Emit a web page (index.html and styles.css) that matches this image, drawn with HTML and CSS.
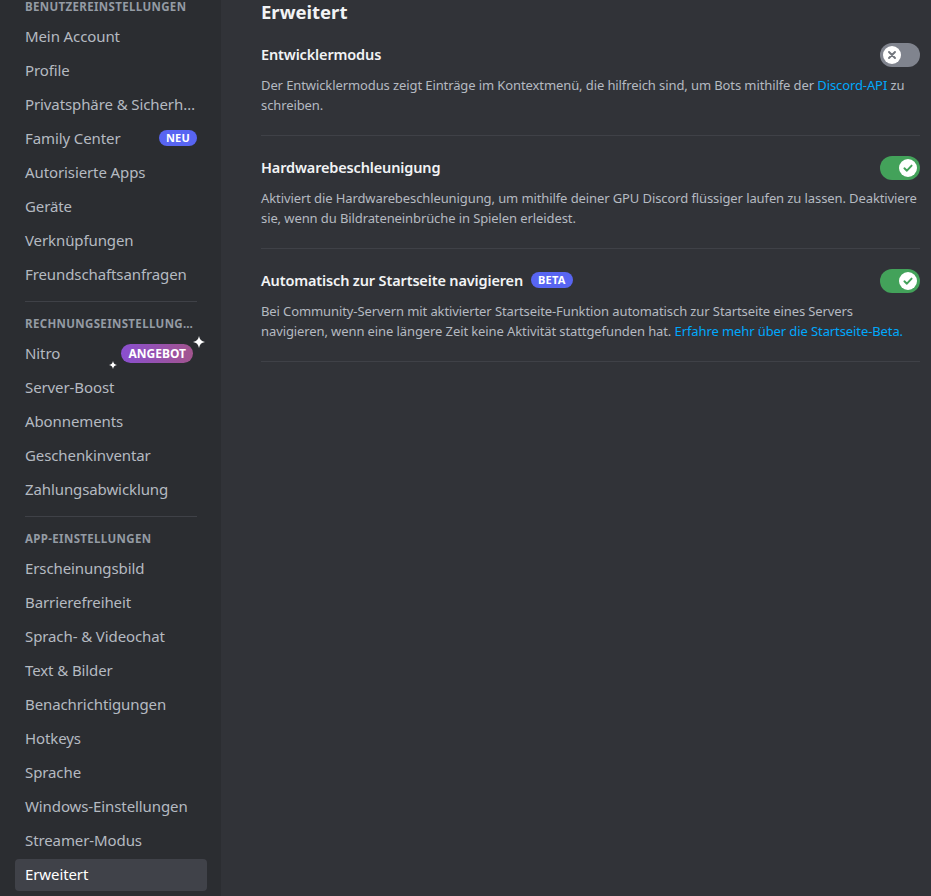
FILE: index.html
```html
<!DOCTYPE html>
<html lang="de">
<head>
<meta charset="utf-8">
<title>Erweitert</title>
<link rel="stylesheet" href="styles.css">
</head>
<body>
<div class="app">
  <nav class="sidebar">
    <div class="side-inner">
      <div class="side-header">Benutzereinstellungen</div>
      <div class="side-item">Mein Account</div>
      <div class="side-item">Profile</div>
      <div class="side-item">Privatsphäre &amp; Sicherheit</div>
      <div class="side-item with-badge">Family Center <span class="badge-neu">NEU</span></div>
      <div class="side-item">Autorisierte Apps</div>
      <div class="side-item">Geräte</div>
      <div class="side-item">Verknüpfungen</div>
      <div class="side-item">Freundschaftsanfragen</div>
      <div class="side-sep"></div>
      <div class="side-header">Rechnungseinstellungen</div>
      <div class="side-item with-badge">Nitro
        <span class="offer">
          <svg class="spark spark-big" viewBox="0 0 12 12" width="12" height="12"><path d="M6 0 C6.6 3.6 8.4 5.4 12 6 C8.4 6.6 6.6 8.4 6 12 C5.4 8.4 3.6 6.6 0 6 C3.6 5.4 5.4 3.6 6 0 Z" fill="#fff"/></svg>
          <span class="badge-offer">ANGEBOT</span>
          <svg class="spark spark-small" viewBox="0 0 12 12" width="8" height="8"><path d="M6 0 C6.6 3.6 8.4 5.4 12 6 C8.4 6.6 6.6 8.4 6 12 C5.4 8.4 3.6 6.6 0 6 C3.6 5.4 5.4 3.6 6 0 Z" fill="#fff"/></svg>
        </span>
      </div>
      <div class="side-item">Server-Boost</div>
      <div class="side-item">Abonnements</div>
      <div class="side-item">Geschenkinventar</div>
      <div class="side-item">Zahlungsabwicklung</div>
      <div class="side-sep"></div>
      <div class="side-header">App-Einstellungen</div>
      <div class="side-item">Erscheinungsbild</div>
      <div class="side-item">Barrierefreiheit</div>
      <div class="side-item">Sprach- &amp; Videochat</div>
      <div class="side-item">Text &amp; Bilder</div>
      <div class="side-item">Benachrichtigungen</div>
      <div class="side-item">Hotkeys</div>
      <div class="side-item">Sprache</div>
      <div class="side-item">Windows-Einstellungen</div>
      <div class="side-item">Streamer-Modus</div>
      <div class="side-item selected">Erweitert</div>
    </div>
  </nav>
  <main class="content">
    <h1 class="title">Erweitert</h1>

    <section class="setting">
      <div class="setting-row">
        <h2 class="setting-title">Entwicklermodus</h2>
        <div class="toggle off">
          <span class="knob">
            <svg viewBox="0 0 20 20" width="12" height="12"><path d="M5 5 L15 15 M15 5 L5 15" stroke="#72767d" stroke-width="3.2" stroke-linecap="round"/></svg>
          </span>
        </div>
      </div>
      <p class="setting-desc">Der Entwicklermodus zeigt Einträge im Kontextmenü, die hilfreich sind, um Bots mithilfe der <a class="link">Discord-API</a> zu schreiben.</p>
    </section>

    <section class="setting">
      <div class="setting-row">
        <h2 class="setting-title">Hardwarebeschleunigung</h2>
        <div class="toggle on">
          <span class="knob">
            <svg viewBox="0 0 20 20" width="12" height="12"><path d="M4 10.5 L8.2 14.5 L16 6" fill="none" stroke="#43a25a" stroke-width="3.2" stroke-linecap="round" stroke-linejoin="round"/></svg>
          </span>
        </div>
      </div>
      <p class="setting-desc">Aktiviert die Hardwarebeschleunigung, um mithilfe deiner GPU Discord flüssiger laufen zu lassen. Deaktiviere sie, wenn du Bildrateneinbrüche in Spielen erleidest.</p>
    </section>

    <section class="setting">
      <div class="setting-row">
        <h2 class="setting-title">Automatisch zur Startseite navigieren <span class="badge-beta">BETA</span></h2>
        <div class="toggle on">
          <span class="knob">
            <svg viewBox="0 0 20 20" width="12" height="12"><path d="M4 10.5 L8.2 14.5 L16 6" fill="none" stroke="#43a25a" stroke-width="3.2" stroke-linecap="round" stroke-linejoin="round"/></svg>
          </span>
        </div>
      </div>
      <p class="setting-desc">Bei Community-Servern mit aktivierter Startseite-Funktion automatisch zur Startseite eines Servers navigieren, wenn eine längere Zeit keine Aktivität stattgefunden hat. <a class="link">Erfahre mehr über die Startseite-Beta.</a></p>
    </section>
  </main>
</div>
</body>
</html>
```

FILE: styles.css
```css
* { box-sizing: border-box; }
html, body {
  margin: 0;
  padding: 0;
  height: 100%;
  background: #313338;
  font-family: "Noto Sans", "Open Sans", sans-serif;
  overflow: hidden;
}
.app {
  display: flex;
  height: 896px;
}
.sidebar {
  width: 221px;
  flex: 0 0 221px;
  background: #2b2d31;
  overflow: hidden;
}
.side-inner {
  margin-top: -7px;
  padding: 0 14px 0 15px;
  display: flex;
  flex-direction: column;
}
.side-header {
  padding: 6px 10px;
  font-size: 11.5px;
  line-height: 16px;
  font-weight: 700;
  text-transform: uppercase;
  letter-spacing: 0.35px;
  color: #949ba4;
  white-space: nowrap;
  overflow: hidden;
  text-overflow: ellipsis;
}
.side-item {
  display: block;
  height: 32px;
  margin-bottom: 2px;
  padding: 0 10px 2px;
  border-radius: 4px;
  font-size: 15px;
  line-height: 30px;
  letter-spacing: -0.1px;
  color: #b5bac1;
  white-space: nowrap;
  overflow: hidden;
  text-overflow: ellipsis;
}
.side-item.with-badge {
  display: flex;
  justify-content: space-between;
  align-items: center;
  overflow: visible;
}
.side-item.selected {
  background: #404249;
  color: #ffffff;
}
.side-sep {
  height: 1px;
  background: #3f4147;
  margin: 8px 10px;
}
.badge-neu {
  background: #5865f2;
  color: #fff;
  font-size: 11px;
  font-weight: 700;
  line-height: 16px;
  height: 16px;
  padding: 0 7px;
  border-radius: 8px;
  letter-spacing: 0.2px;
}
.offer {
  display: flex;
  align-items: center;
  position: relative;
  margin-right: 4px;
}
.badge-offer {
  background: linear-gradient(90deg, #8a4fd0 0%, #a2548e 100%);
  color: #fff;
  font-size: 12px;
  font-weight: 700;
  line-height: 19px;
  height: 19px;
  padding: 0 7px;
  border-radius: 10px;
  letter-spacing: 0;
}
.spark {
  position: absolute;
}
.spark-big {
  right: -12px;
  top: -8px;
}
.spark-small {
  left: -12px;
  bottom: -6px;
}
.content {
  flex: 1;
  padding: 0 11px 0 40px;
}
.title {
  margin: 0 0 19px;
  font-size: 18.5px;
  line-height: 24px;
  font-weight: 700;
  color: #f2f3f5;
}
.setting {
  border-bottom: 1px solid #3f4147;
  padding-bottom: 20px;
  margin-bottom: 20px;
}
.setting-row {
  display: flex;
  justify-content: space-between;
  align-items: center;
  height: 24px;
}
.setting-title {
  margin: 0;
  padding-bottom: 2px;
  font-size: 14.5px;
  font-weight: 600;
  line-height: 20px;
  letter-spacing: -0.15px;
  color: #f2f3f5;
  display: flex;
  align-items: center;
}
.badge-beta {
  background: #5865f2;
  color: #fff;
  font-size: 11px;
  font-weight: 700;
  line-height: 16px;
  height: 16px;
  padding: 0 7px;
  border-radius: 8px;
  margin-left: 8px;
  letter-spacing: 0.2px;
}
.setting-desc {
  margin: 8px 0 0;
  font-size: 13px;
  line-height: 20px;
  letter-spacing: -0.1px;
  color: #b5bac1;
}
.link {
  color: #00a8fc;
  cursor: pointer;
}
.toggle {
  width: 40px;
  height: 24px;
  border-radius: 12px;
  display: flex;
  align-items: center;
  padding: 3px;
}
.toggle.off {
  background: #80848e;
  justify-content: flex-start;
}
.toggle.on {
  background: #43a25a;
  justify-content: flex-end;
}
.knob {
  width: 18px;
  height: 18px;
  border-radius: 50%;
  background: #fff;
  display: flex;
  align-items: center;
  justify-content: center;
}
```
